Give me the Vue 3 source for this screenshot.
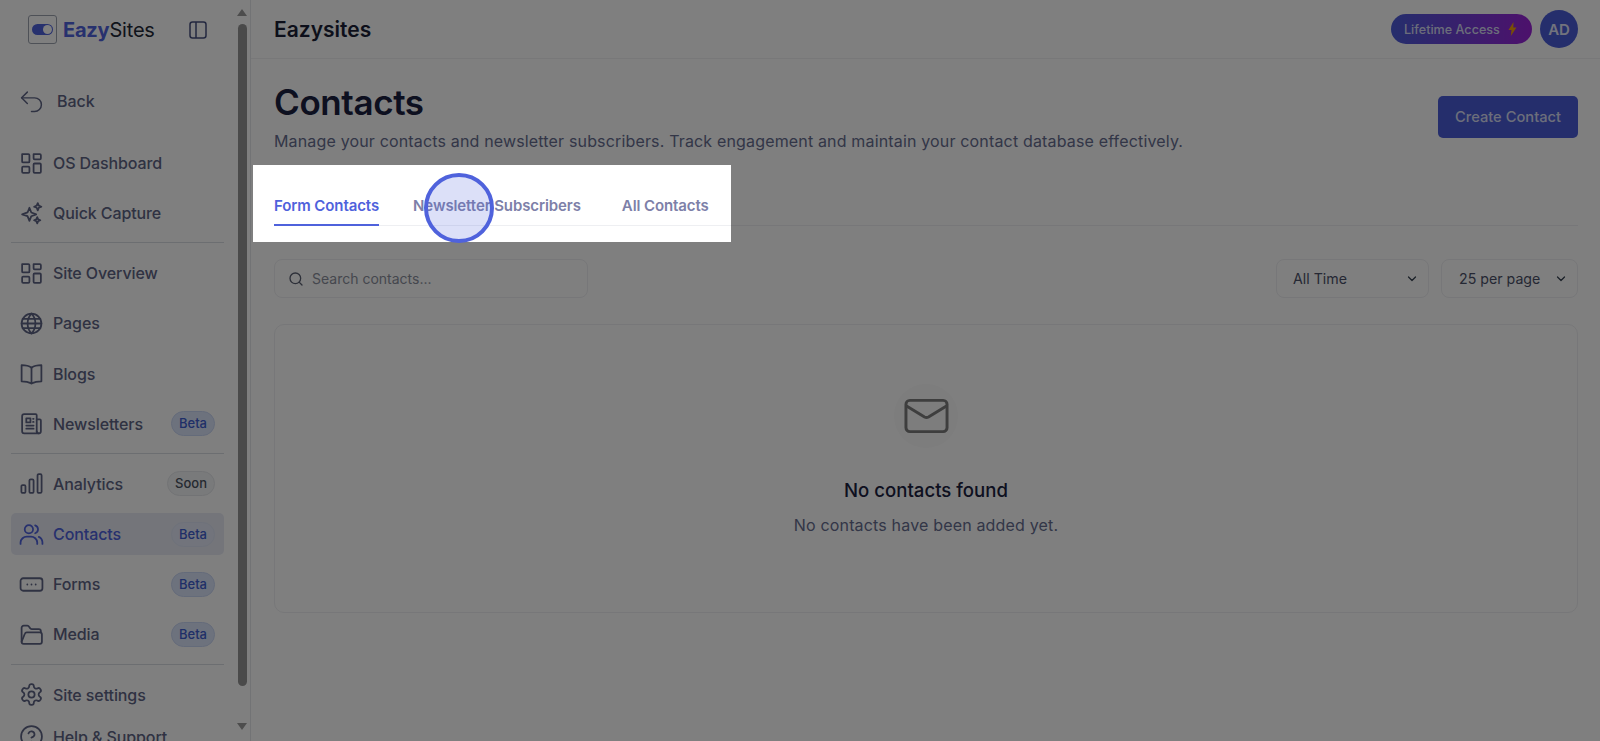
<template>
  <div class="app">
    <aside class="sidebar">
      <div class="side-inner">
        <div class="logo-row">
          <div class="logo-box"><span class="toggle"><span class="knob"></span></span></div>
          <div class="logo-text"><b>Eazy</b>Sites</div>
          <svg class="panel-icon" viewBox="0 0 18 18" fill="none" stroke="#475080" stroke-width="1.5">
            <rect x="1" y="1" width="16" height="16" rx="2.5" />
            <path d="M7 1v16" />
          </svg>
        </div>
        <div class="back-row">
          <svg class="nav-icon" viewBox="0 0 24 24" fill="none" stroke="currentColor" stroke-width="1.4" stroke-linecap="round" stroke-linejoin="round">
            <path d="M8 3 2.5 8.5 8 14" />
            <path d="M2.5 8.5H15a6.5 6.5 0 0 1 0 13h-3" />
          </svg>
          <span>Back</span>
        </div>
        <template v-for="(group, gi) in groups" :key="gi">
          <div v-if="gi > 0" class="divider"></div>
          <div v-for="item in group" :key="item.label" class="nav-item" :class="{ active: item.active, tight: item.tight }">
            <svg class="nav-icon" viewBox="0 0 24 24" fill="none" stroke="currentColor" stroke-width="1.7" stroke-linecap="round" stroke-linejoin="round">
              <path v-for="(d, i) in icons[item.icon]" :key="i" :d="d" />
            </svg>
            <span class="nav-label">{{ item.label }}</span>
            <span v-if="item.badge" class="badge" :class="item.badge.toLowerCase()">{{ item.badge }}</span>
          </div>
        </template>
      </div>
      <div class="scrollbar">
        <span class="arrow up"></span>
        <span class="thumb"></span>
        <span class="arrow down"></span>
      </div>
    </aside>

    <div class="main">
      <header class="topbar">
        <div class="top-title">Eazysites</div>
        <div class="top-right">
          <div class="lifetime">
            Lifetime Access
            <svg width="9" height="14" viewBox="0 0 9 14"><path d="M5.5 0 .5 8h3L2.8 14 8.500 5.500h-3.200z" fill="#f59e0b" /></svg>
          </div>
          <div class="avatar">AD</div>
        </div>
      </header>

      <div class="content">
        <div class="page-head">
          <div>
            <h1>Contacts</h1>
            <p>Manage your contacts and newsletter subscribers. Track engagement and maintain your contact database effectively.</p>
          </div>
          <button class="create-btn">Create Contact</button>
        </div>

        <div class="tabs">
          <div v-for="(tab, i) in tabs" :key="tab" class="tab" :class="{ current: i === 0 }">{{ tab }}</div>
        </div>

        <div class="filters">
          <div class="search">
            <svg width="16" height="16" viewBox="0 0 24 24" fill="none" stroke="#5b6072" stroke-width="2" stroke-linecap="round">
              <circle cx="11" cy="11" r="8" />
              <path d="m21 21-4.300-4.300" />
            </svg>
            <span>Search contacts...</span>
          </div>
          <div class="selects">
            <div class="select time">All Time
              <svg width="12" height="12" viewBox="0 0 24 24" fill="none" stroke="#374151" stroke-width="2.500" stroke-linecap="round" stroke-linejoin="round"><path d="m5 8 7 7 7-7" /></svg>
            </div>
            <div class="select perpage">25 per page
              <svg width="12" height="12" viewBox="0 0 24 24" fill="none" stroke="#374151" stroke-width="2.500" stroke-linecap="round" stroke-linejoin="round"><path d="m5 8 7 7 7-7" /></svg>
            </div>
          </div>
        </div>

        <div class="empty">
          <div class="empty-icon">
            <svg width="45" height="36" viewBox="0 0 46 36" fill="none" stroke="#7c7c7c" stroke-width="3" stroke-linecap="round" stroke-linejoin="round">
              <rect x="2" y="2" width="42" height="32" rx="4" />
              <path d="m3 8 18 11a4 4 0 0 0 4 0L43 8" />
            </svg>
          </div>
          <div class="empty-title">No contacts found</div>
          <div class="empty-sub">No contacts have been added yet.</div>
        </div>
      </div>
    </div>

    <!-- tour overlay -->
    <div class="spotlight"></div>
    <div class="pulse"></div>
  </div>
</template>

<script setup>
const icons = {
  grid: ['M3 3h6a1 1 0 0 1 1 1v6a1 1 0 0 1-1 1H4a1 1 0 0 1-1-1V3z', 'M14 3h6a1 1 0 0 1 1 1v3a1 1 0 0 1-1 1h-5a1 1 0 0 1-1-1V3z', 'M15 12h5a1 1 0 0 1 1 1v7a1 1 0 0 1-1 1h-5a1 1 0 0 1-1-1v-7a1 1 0 0 1 1-1z', 'M4 15h5a1 1 0 0 1 1 1v4a1 1 0 0 1-1 1H4a1 1 0 0 1-1-1v-4a1 1 0 0 1 1-1z'],
  sparkle: ['M10 6.500 11.800 11 16.500 12.800 11.800 14.600 10 19 8.200 14.600 3 12.800 8.200 11z', 'M18 2l1 2.500 2.500 1-2.500 1-1 2.500-1-2.500-2.500-1 2.500-1z', 'M17.500 15.500l.9 2.100 2.100.9-2.100.9-.9 2.100-.9-2.100-2.100-.9 2.100-.9z'],
  globe: ['M12 2.500a9.500 9.500 0 1 0 0 19 9.500 9.500 0 0 0 0-19z', 'M2.500 12h19', 'M3.500 7.500h17', 'M3.500 16.500h17', 'M12 2.500c-5 5-5 14 0 19', 'M12 2.500c5 5 5 14 0 19'],
  book: ['M12 6.500C10 5 7 4 2.500 4v15.500c4.500 0 7.500 1 9.500 2 2-1 5-2 9.500-2V4C17 4 14 5 12 6.500z', 'M12 6.500v15'],
  news: ['M3 5a2 2 0 0 1 2-2h11a1 1 0 0 1 1 1v15.500a2 2 0 0 0 2 2H5a2 2 0 0 1-2-2V5z', 'M17 8h3a1 1 0 0 1 1 1v10.500a2 2 0 0 1-4 0', 'M7 7h4v4H7z', 'M13.500 7.500H14', 'M13.500 10.500H14', 'M7 14h7', 'M7 17h7'],
  bars: ['M3.500 13.500h1.500a1.200 1.200 0 0 1 1.200 1.200v5.100A1.200 1.200 0 0 1 5 21H3.500a1.200 1.200 0 0 1-1.200-1.200v-5.100a1.200 1.200 0 0 1 1.200-1.200z', 'M11.200 8h1.600A1.200 1.200 0 0 1 14 9.200v10.600a1.200 1.200 0 0 1-1.200 1.200h-1.600a1.200 1.200 0 0 1-1.200-1.200V9.200A1.200 1.200 0 0 1 11.200 8z', 'M19 3h1.500a1.200 1.200 0 0 1 1.200 1.200v15.600a1.200 1.200 0 0 1-1.200 1.200H19a1.200 1.200 0 0 1-1.200-1.200V4.200A1.200 1.200 0 0 1 19 3z'],
  users: ['M9.500 11a4 4 0 1 0 0-8 4 4 0 0 0 0 8z', 'M1.500 21v-1.500a6 6 0 0 1 6-5.500h4a6 6 0 0 1 6 5.500V21', 'M15.500 3.200a4 4 0 0 1 0 7.600', 'M19 14.300a6 6 0 0 1 3.500 5.200V21'],
  form: ['M4 6h16a2.500 2.500 0 0 1 2.500 2.500v7A2.500 2.500 0 0 1 20 18H4a2.500 2.500 0 0 1-2.500-2.500v-7A2.500 2.500 0 0 1 4 6z', 'M8 12h.01', 'M12 12h.01', 'M16 12h.01'],
  folder: ['M2.500 19V5.500a2 2 0 0 1 2-2h3.500a2 2 0 0 1 1.700 1l.8 1.300a2 2 0 0 0 1.700 1H19a2 2 0 0 1 2 2V10', 'M4.500 21H20a2 2 0 0 0 2-2v-7a2 2 0 0 0-2-2H7.500a2 2 0 0 0-1.900 1.300L2.500 19a2 2 0 0 0 2 2z'],
  gear: ['M12 15a3 3 0 1 0 0-6 3 3 0 0 0 0 6z', 'M12.220 2h-.44a2 2 0 0 0-2 2v.18a2 2 0 0 1-1 1.730l-.43.25a2 2 0 0 1-2 0l-.15-.08a2 2 0 0 0-2.730.73l-.22.38a2 2 0 0 0 .73 2.730l.15.1a2 2 0 0 1 1 1.720v.51a2 2 0 0 1-1 1.740l-.15.09a2 2 0 0 0-.73 2.730l.22.38a2 2 0 0 0 2.730.73l.15-.08a2 2 0 0 1 2 0l.43.25a2 2 0 0 1 1 1.730V20a2 2 0 0 0 2 2h.44a2 2 0 0 0 2-2v-.18a2 2 0 0 1 1-1.730l.43-.25a2 2 0 0 1 2 0l.15.08a2 2 0 0 0 2.730-.73l.22-.39a2 2 0 0 0-.73-2.730l-.15-.08a2 2 0 0 1-1-1.740v-.5a2 2 0 0 1 1-1.740l.15-.09a2 2 0 0 0 .73-2.730l-.22-.38a2 2 0 0 0-2.730-.73l-.15.08a2 2 0 0 1-2 0l-.43-.25a2 2 0 0 1-1-1.730V4a2 2 0 0 0-2-2z'],
  help: ['M12 22a10 10 0 1 0 0-20 10 10 0 0 0 0 20z', 'M9.100 9a3 3 0 0 1 5.800 1c0 2-3 3-3 3', 'M12 17h.01']
}

const groups = [
  [
    { label: 'OS Dashboard', icon: 'grid' },
    { label: 'Quick Capture', icon: 'sparkle' }
  ],
  [
    { label: 'Site Overview', icon: 'grid' },
    { label: 'Pages', icon: 'globe' },
    { label: 'Blogs', icon: 'book' },
    { label: 'Newsletters', icon: 'news', badge: 'Beta' }
  ],
  [
    { label: 'Analytics', icon: 'bars', badge: 'Soon' },
    { label: 'Contacts', icon: 'users', badge: 'Beta', active: true },
    { label: 'Forms', icon: 'form', badge: 'Beta' },
    { label: 'Media', icon: 'folder', badge: 'Beta' }
  ],
  [
    { label: 'Site settings', icon: 'gear', tight: true },
    { label: 'Help & Support', icon: 'help' }
  ]
]

const tabs = ['Form Contacts', 'Newsletter Subscribers', 'All Contacts']
</script>

<style>
html, body {
  margin: 0;
  overflow: hidden;
}
</style>

<style scoped>
.app {
  display: flex;
  height: 741px;
  width: 1600px;
  overflow: hidden;
  position: relative;
  background: #fff;
  font-family: Inter, "Liberation Sans", sans-serif;
  color: #111827;
}

.sidebar {
  width: 250px;
  flex-shrink: 0;
  display: flex;
  border-right: 1px solid #e5e7eb;
  box-sizing: content-box;
  background: #fff;
}
.side-inner {
  width: 236px;
  padding: 0 12px 0 11px;
  box-sizing: border-box;
  flex-shrink: 0;
}
.logo-row {
  display: flex;
  align-items: center;
  height: 59px;
  padding-left: 17px;
}
.logo-box {
  width: 29px;
  height: 29px;
  border: 1px solid #9ca3af;
  border-radius: 3px;
  box-sizing: border-box;
  display: flex;
  align-items: center;
  justify-content: center;
}
.toggle {
  width: 21px;
  height: 11px;
  background: #4f62dc;
  border-radius: 6px;
  position: relative;
}
.knob {
  position: absolute;
  right: 1px;
  top: 1px;
  width: 9px;
  height: 9px;
  background: #fff;
  border-radius: 50%;
}
.logo-text {
  margin-left: 6px;
  font-size: 20px;
  color: #1f2937;
  letter-spacing: -0.2px;
}
.logo-text b {
  color: #4f62dc;
  font-weight: 700;
}
.panel-icon {
  width: 18px;
  height: 18px;
  margin-left: auto;
  margin-right: 17px;
}

.back-row {
  display: flex;
  align-items: center;
  height: 42px;
  margin-top: 21px;
  margin-bottom: 20px;
  padding-left: 8px;
  font-size: 16px;
  font-weight: 500;
  color: #5e6485;
  gap: 13px;
}
.nav-item {
  display: flex;
  align-items: center;
  height: 42px;
  margin-bottom: 8.200px;
  padding: 0 9px 0 8px;
  border-radius: 5px;
  font-size: 16px;
  letter-spacing: -0.1px;
  font-weight: 500;
  color: #5e6485;
}
.nav-item.tight {
  margin-bottom: 0;
}
.nav-item.active {
  background: #e8ebf5;
  color: #4f62dc;
}
.nav-icon {
  width: 25px;
  height: 25px;
  flex-shrink: 0;
}
.nav-label {
  margin-left: 9px;
  flex: 1;
  white-space: nowrap;
}
.badge {
  height: 25px;
  line-height: 23px;
  box-sizing: border-box;
  padding: 0 7px;
  border-radius: 13px;
  font-size: 13px;
  letter-spacing: 0;
  background: #dbe5fb;
  border: 1px solid #c9d6f4;
  color: #3f5fd0;
}
.badge.soon {
  background: #f3f4f6;
  border-color: #e5e7eb;
  color: #4b5563;
}
.nav-item.active .badge {
  background: #e4e9f8;
  border-color: #dde3f5;
}
.divider {
  height: 1px;
  background: #d9dce3;
  margin-bottom: 8.900px;
}

.scrollbar {
  width: 12px;
  display: flex;
  flex-direction: column;
  align-items: center;
  height: 741px;
}
.arrow {
  width: 0;
  height: 0;
  border-left: 5px solid transparent;
  border-right: 5px solid transparent;
  flex-shrink: 0;
}
.arrow.up {
  margin-top: 9px;
  border-bottom: 7px solid #9a9a9a;
}
.arrow.down {
  margin-top: 37px;
  border-top: 7px solid #9a9a9a;
}
.thumb {
  width: 9px;
  height: 662px;
  margin-top: 8px;
  background: #959595;
  border-radius: 5px;
  flex-shrink: 0;
}

.main {
  flex: 1;
  min-width: 0;
}
.topbar {
  height: 59px;
  box-sizing: border-box;
  border-bottom: 1px solid #f1f1f3;
  display: flex;
  align-items: center;
  justify-content: space-between;
  padding: 0 22px 0 23px;
}
.top-title {
  font-size: 21px;
  font-weight: 600;
  color: #1a1f36;
}
.top-right {
  display: flex;
  align-items: center;
  gap: 8px;
}
.lifetime {
  width: 141px;
  height: 30px;
  box-sizing: border-box;
  display: flex;
  align-items: center;
  gap: 8px;
  padding-left: 13px;
  border-radius: 15px;
  background: linear-gradient(90deg, #4a5cd8, #9a22d8);
  color: #d7dbf5;
  font-size: 12.600px;
  font-weight: 500;
}
.avatar {
  width: 38px;
  height: 38px;
  border-radius: 50%;
  background: #4a5cd8;
  color: #e5e7fa;
  display: flex;
  align-items: center;
  justify-content: center;
  font-size: 15px;
  font-weight: 600;
}

.content {
  padding: 0 22px 0 23px;
}
.page-head {
  display: flex;
  justify-content: space-between;
  align-items: flex-start;
  padding-top: 23px;
}
h1 {
  margin: 0;
  font-size: 35px;
  line-height: 40px;
  font-weight: 600;
  letter-spacing: -0.4px;
  color: #1a2140;
}
.page-head p {
  margin: 7px 0 0;
  font-size: 16px;
  line-height: 24px;
  letter-spacing: 0.16px;
  color: #666d8f;
}
.create-btn {
  margin-top: 14px;
  width: 140px;
  height: 42px;
  border: none;
  border-radius: 5px;
  background: #4a5cd8;
  color: #d9ddf6;
  font: 500 14.700px Inter, "Liberation Sans", sans-serif;
  padding-bottom: 2px;
}

.tabs {
  display: flex;
  gap: 34px;
  margin-top: 18px;
  height: 54px;
  align-items: flex-end;
  border-bottom: 1px solid #eeeff2;
}
.tab {
  height: 43px;
  line-height: 45px;
  box-sizing: border-box;
  font-size: 15px;
  letter-spacing: -0.1px;
  font-weight: 600;
  color: #7d80a8;
  margin-bottom: -1px;
}
.tab:last-child {
  margin-left: 7px;
}
.tab.current {
  color: #4f62dc;
  border-bottom: 2px solid #4f62dc;
}

.filters {
  display: flex;
  justify-content: space-between;
  margin-top: 33px;
}
.search {
  width: 314px;
  height: 39px;
  box-sizing: border-box;
  border: 1px solid #eeeff2;
  border-radius: 8px;
  display: flex;
  align-items: center;
  gap: 8px;
  padding-left: 13px;
  font-size: 14px;
  color: #8b8f9c;
}
.selects {
  display: flex;
  gap: 12px;
}
.select {
  height: 39px;
  box-sizing: border-box;
  border: 1px solid #eeeff2;
  border-radius: 8px;
  display: flex;
  align-items: center;
  justify-content: space-between;
  font-size: 14.200px;
  color: #4b5068;
  padding: 0 10px 0 16px;
}
.select.time {
  width: 153px;
}
.select.perpage {
  width: 137px;
  padding-left: 17px;
}

.empty {
  margin-top: 26px;
  height: 289px;
  box-sizing: border-box;
  border: 1px solid #eeeff2;
  border-radius: 10px;
  display: flex;
  flex-direction: column;
  align-items: center;
  padding-top: 59px;
}
.empty-icon {
  width: 64px;
  height: 64px;
  border-radius: 50%;
  background: #fafafa;
  display: flex;
  align-items: center;
  justify-content: center;
}
.empty-title {
  margin-top: 28px;
  font-size: 18.600px;
  line-height: 28px;
  font-weight: 500;
  color: #1a2140;
}
.empty-sub {
  margin-top: 9px;
  font-size: 16px;
  line-height: 24px;
  letter-spacing: 0.17px;
  color: #666d8f;
}

/* hole in the dim layer */
.spotlight {
  position: absolute;
  left: 253px;
  top: 165px;
  width: 478px;
  height: 77px;
  box-shadow: 0 0 0 2000px rgba(0, 0, 0, 0.5);
}
.pulse {
  position: absolute;
  left: 424px;
  top: 173px;
  width: 70px;
  height: 70px;
  box-sizing: border-box;
  border: 4px solid #4f62dc;
  border-radius: 50%;
  background: rgba(79, 98, 220, 0.2);
}
</style>
